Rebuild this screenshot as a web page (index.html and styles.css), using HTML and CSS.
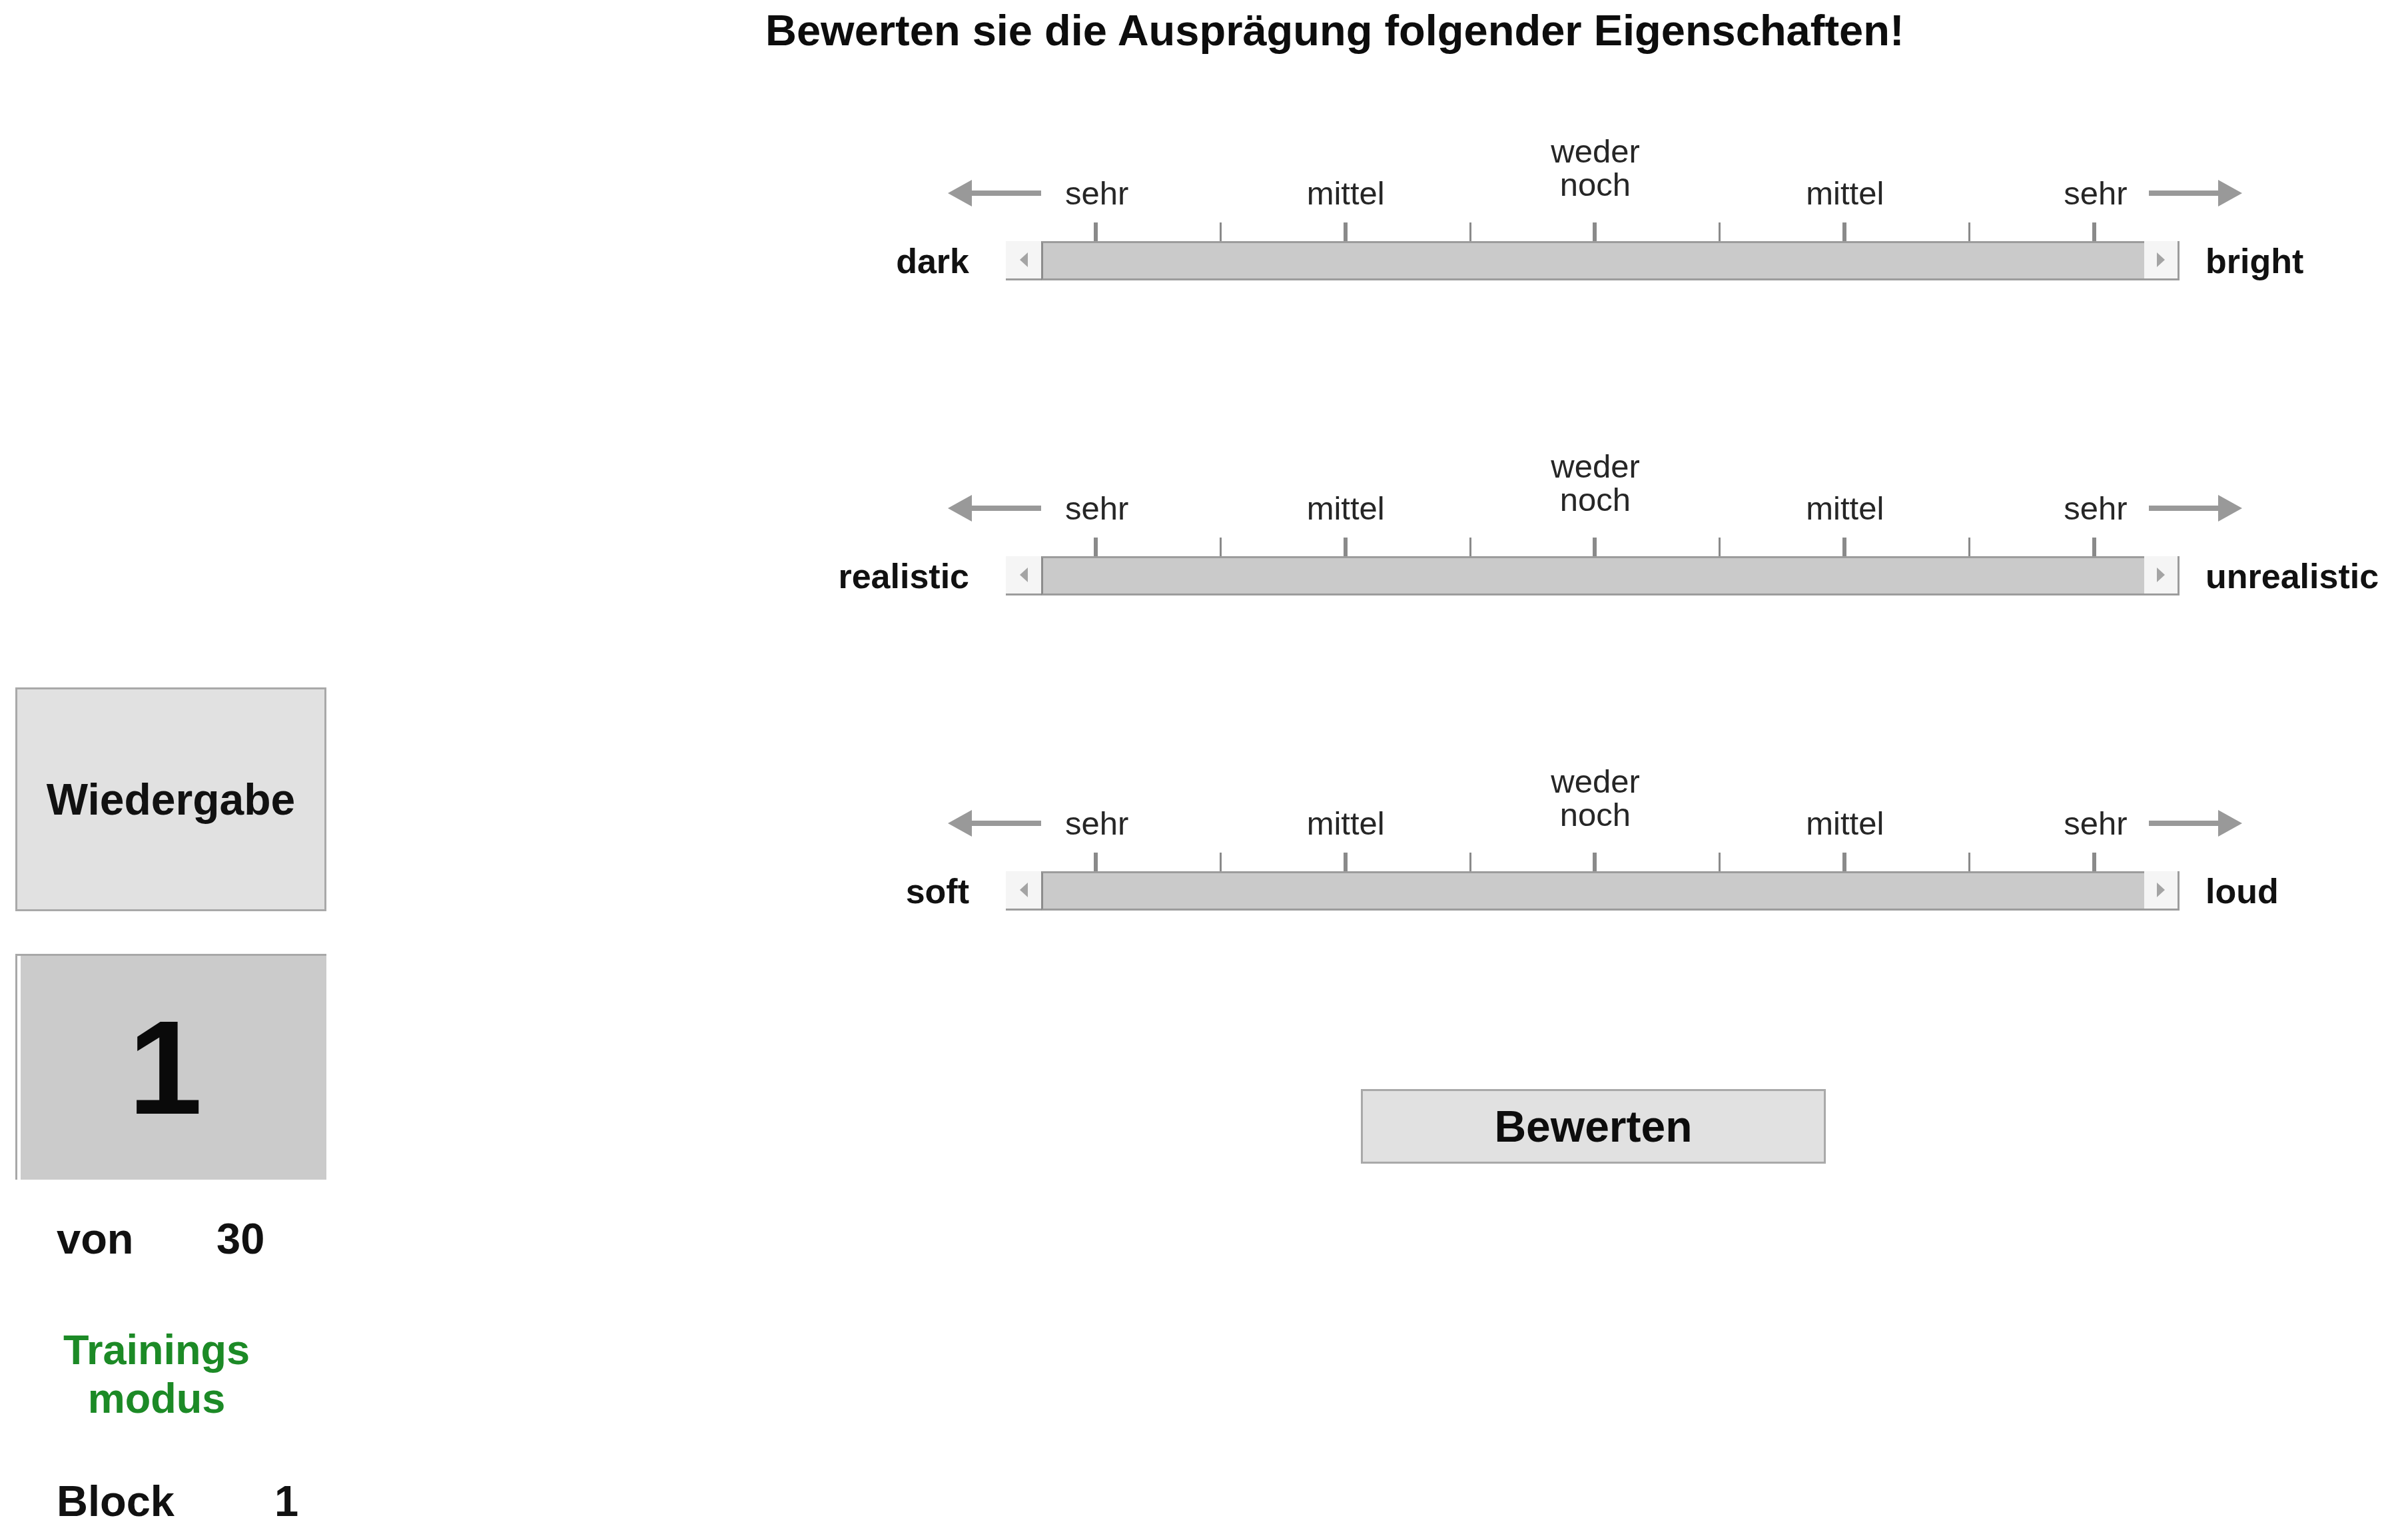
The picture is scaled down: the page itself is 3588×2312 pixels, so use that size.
FILE: index.html
```html
<!DOCTYPE html>
<html lang="de">
<head>
<meta charset="utf-8">
<title>Bewertung</title>
<link rel="stylesheet" href="styles.css">
</head>
<body>
<div class="app">
  <aside class="sidebar">
    <div class="play-btn">Wiedergabe</div>
    <div class="counter">1</div>
    <div class="info-row row-von"><span class="info-label">von</span><span>30</span></div>
    <div class="mode">Trainings<br>modus</div>
    <div class="info-row row-block"><span class="info-label">Block</span><span>1</span></div>
  </aside>
  <main class="main">
    <h1 class="title">Bewerten sie die Ausprägung folgender Eigenschaften!</h1>

    <section class="slider first">
      <div class="scale-head">
        <div class="cell cell-start">
          <svg class="arrow" viewBox="0 0 140 42" width="140" height="42"><polygon points="0,21 36,1 36,41" /><rect x="30" y="17" width="110" height="8" /></svg>
          <span>sehr</span>
        </div>
        <div class="cell">mittel</div>
        <div class="cell cell-mid">weder<br>noch</div>
        <div class="cell">mittel</div>
        <div class="cell cell-end">
          <span>sehr</span>
          <svg class="arrow" viewBox="0 0 140 42" width="140" height="42"><polygon points="140,21 104,1 104,41" /><rect x="0" y="17" width="110" height="8" /></svg>
        </div>
      </div>
      <div class="ticks">
        <i class="tick major"></i><i class="tick"></i><i class="tick major"></i><i class="tick"></i><i class="tick major"></i><i class="tick"></i><i class="tick major"></i><i class="tick"></i><i class="tick major"></i>
      </div>
      <div class="pole left">dark</div>
      <div class="track">
        <div class="step step-l"><svg viewBox="0 0 12 22" width="12" height="22"><polygon points="0,11 12,0 12,22" /></svg></div>
        <div class="bar"></div>
        <div class="step step-r"><svg viewBox="0 0 12 22" width="12" height="22"><polygon points="12,11 0,0 0,22" /></svg></div>
      </div>
      <div class="pole right">bright</div>
    </section>

    <section class="slider">
      <div class="scale-head">
        <div class="cell cell-start">
          <svg class="arrow" viewBox="0 0 140 42" width="140" height="42"><polygon points="0,21 36,1 36,41" /><rect x="30" y="17" width="110" height="8" /></svg>
          <span>sehr</span>
        </div>
        <div class="cell">mittel</div>
        <div class="cell cell-mid">weder<br>noch</div>
        <div class="cell">mittel</div>
        <div class="cell cell-end">
          <span>sehr</span>
          <svg class="arrow" viewBox="0 0 140 42" width="140" height="42"><polygon points="140,21 104,1 104,41" /><rect x="0" y="17" width="110" height="8" /></svg>
        </div>
      </div>
      <div class="ticks">
        <i class="tick major"></i><i class="tick"></i><i class="tick major"></i><i class="tick"></i><i class="tick major"></i><i class="tick"></i><i class="tick major"></i><i class="tick"></i><i class="tick major"></i>
      </div>
      <div class="pole left">realistic</div>
      <div class="track">
        <div class="step step-l"><svg viewBox="0 0 12 22" width="12" height="22"><polygon points="0,11 12,0 12,22" /></svg></div>
        <div class="bar"></div>
        <div class="step step-r"><svg viewBox="0 0 12 22" width="12" height="22"><polygon points="12,11 0,0 0,22" /></svg></div>
      </div>
      <div class="pole right">unrealistic</div>
    </section>

    <section class="slider">
      <div class="scale-head">
        <div class="cell cell-start">
          <svg class="arrow" viewBox="0 0 140 42" width="140" height="42"><polygon points="0,21 36,1 36,41" /><rect x="30" y="17" width="110" height="8" /></svg>
          <span>sehr</span>
        </div>
        <div class="cell">mittel</div>
        <div class="cell cell-mid">weder<br>noch</div>
        <div class="cell">mittel</div>
        <div class="cell cell-end">
          <span>sehr</span>
          <svg class="arrow" viewBox="0 0 140 42" width="140" height="42"><polygon points="140,21 104,1 104,41" /><rect x="0" y="17" width="110" height="8" /></svg>
        </div>
      </div>
      <div class="ticks">
        <i class="tick major"></i><i class="tick"></i><i class="tick major"></i><i class="tick"></i><i class="tick major"></i><i class="tick"></i><i class="tick major"></i><i class="tick"></i><i class="tick major"></i>
      </div>
      <div class="pole left">soft</div>
      <div class="track">
        <div class="step step-l"><svg viewBox="0 0 12 22" width="12" height="22"><polygon points="0,11 12,0 12,22" /></svg></div>
        <div class="bar"></div>
        <div class="step step-r"><svg viewBox="0 0 12 22" width="12" height="22"><polygon points="12,11 0,0 0,22" /></svg></div>
      </div>
      <div class="pole right">loud</div>
    </section>

    <div class="submit-row"><div class="submit-btn">Bewerten</div></div>
  </main>
</div>
</body>
</html>
```

FILE: styles.css
```css
html, body {
  margin: 0;
  padding: 0;
  background: #ffffff;
}

body {
  font-family: "Liberation Sans", Arial, sans-serif;
  color: #111111;
  width: 3588px;
  height: 2312px;
  overflow: hidden;
}

.app {
  display: flex;
  align-items: flex-start;
}

/* ---------- sidebar ---------- */
.sidebar {
  width: 515px;
  flex: 0 0 515px;
  padding: 1032px 0 0 23px;
  box-sizing: border-box;
  display: flex;
  flex-direction: column;
}

.play-btn {
  width: 467px;
  height: 336px;
  box-sizing: border-box;
  background: #e1e1e1;
  border: 3px solid #a9a9a9;
  display: flex;
  align-items: center;
  justify-content: center;
  font-size: 66px;
  font-weight: bold;
  color: #111;
}

.counter {
  margin-top: 64px;
  width: 467px;
  height: 339px;
  box-sizing: border-box;
  background: #cbcbcb;
  border-top: 3px solid #a8a8a8;
  border-left: 3px solid #a8a8a8;
  box-shadow: inset 5px 0 0 #ffffff;
  display: flex;
  align-items: center;
  justify-content: center;
  font-size: 200px;
  font-weight: bold;
  line-height: 1;
  color: #0a0a0a;
  padding-right: 20px;
}

.info-row {
  display: flex;
  font-size: 65px;
  font-weight: bold;
  line-height: 74px;
  padding-left: 62px;
}

.row-von {
  margin-top: 52px;
}

.row-von .info-label {
  width: 240px;
}

.row-block {
  margin-top: 81px;
}

.row-block .info-label {
  width: 327px;
}

.mode {
  margin-top: 93px;
  width: 424px;
  text-align: center;
  font-size: 63px;
  font-weight: bold;
  line-height: 73px;
  color: #1c8a26;
}

/* ---------- main ---------- */
.main {
  flex: 1;
  display: flex;
  flex-direction: column;
}

.title {
  margin: 0;
  padding: 9px 0 0 634px;
  font-size: 65px;
  line-height: 74px;
  font-weight: bold;
  color: #0d0d0d;
  white-space: nowrap;
}

.slider {
  display: grid;
  grid-template-columns: 995px 1762px auto;
  grid-template-rows: auto auto 59px;
  margin-top: 254px;
}

.slider.first {
  margin-top: 119px;
}

.scale-head {
  grid-column: 2;
  grid-row: 1;
  margin-left: -52px;
  width: 1874px;
  display: grid;
  grid-template-columns: repeat(5, 374.8px);
  align-items: end;
  font-size: 49px;
  line-height: 50px;
  color: #262626;
}

.cell {
  text-align: center;
  white-space: nowrap;
}

.cell-mid {
  margin-bottom: 13px;
}

.cell-start {
  display: flex;
  align-items: center;
}

.cell-start .arrow {
  margin-left: -35px;
  margin-right: 36px;
}

.cell-end {
  display: flex;
  align-items: center;
  padding-left: 141px;
}

.cell-end .arrow {
  margin-left: 32px;
}

.arrow {
  flex: 0 0 auto;
  fill: #999999;
}

.ticks {
  grid-column: 2;
  grid-row: 2;
  margin-top: 19px;
  margin-left: 41px;
  width: 1687px;
  height: 28px;
  display: grid;
  grid-template-columns: repeat(9, 1fr);
}

.tick {
  justify-self: center;
  width: 3px;
  height: 28px;
  background: #8a8a8a;
}

.tick.major {
  width: 6px;
}

.pole {
  grid-row: 3;
  align-self: center;
  font-size: 52px;
  font-weight: bold;
  line-height: 60px;
  color: #111111;
  white-space: nowrap;
}

.pole.left {
  grid-column: 1;
  text-align: right;
  padding-right: 55px;
}

.pole.right {
  grid-column: 3;
  padding-left: 39px;
}

.track {
  grid-column: 2;
  grid-row: 3;
  display: flex;
  height: 59px;
}

.step {
  width: 53px;
  flex: 0 0 53px;
  box-sizing: border-box;
  background: #f5f5f5;
  border-bottom: 3px solid #9c9c9c;
  display: flex;
  align-items: center;
  justify-content: center;
  fill: #a4a4a4;
}

.step-r {
  border-right: 3px solid #9c9c9c;
}

.bar {
  flex: 1;
  box-sizing: border-box;
  background: #cacaca;
  border-top: 3px solid #9c9c9c;
  border-bottom: 3px solid #9c9c9c;
  border-left: 3px solid #8c8c8c;
}

.submit-row {
  margin-top: 268px;
  padding-left: 1528px;
}

.submit-btn {
  width: 698px;
  height: 112px;
  box-sizing: border-box;
  background: #e1e1e1;
  border: 3px solid #a9a9a9;
  display: flex;
  align-items: center;
  justify-content: center;
  font-size: 66px;
  font-weight: bold;
  color: #0d0d0d;
}
```
